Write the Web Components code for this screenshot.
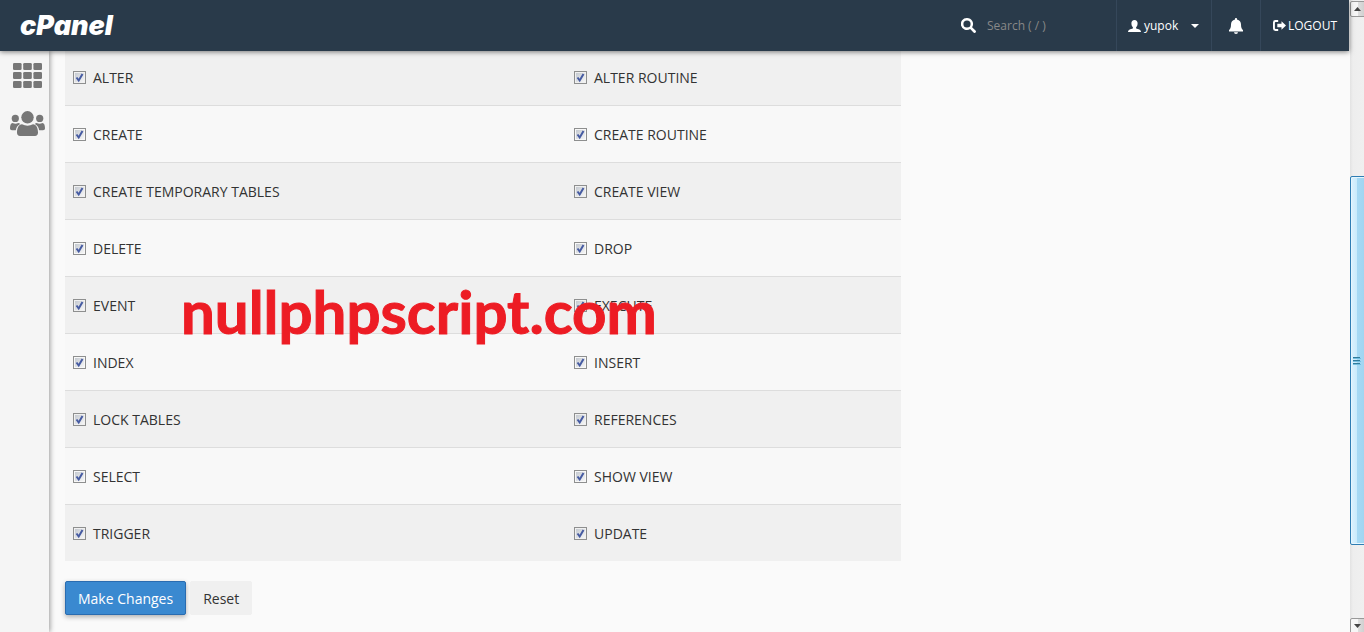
<!DOCTYPE html>
<html lang="en">
<head>
<meta charset="utf-8">
<title>cPanel - Manage User Privileges</title>
<style>
html, body { height: 100%; margin: 0; }
body { font: 14px/20px "Open Sans", "Noto Sans", sans-serif; color: #333; background: #fafafa; overflow: hidden; }
</style>
</head>
<body>
<cp-app></cp-app>

<template id="t-app">
<style>
:host { display: flex; height: 100vh; overflow: hidden; }
.page { flex: 1; min-width: 0; display: flex; flex-direction: column; }
.body { flex: 1; min-height: 0; display: flex; }
main { position: relative; flex: 1; min-width: 0; padding: 0 16px; overflow: hidden; }
</style>
<div class="page">
  <cp-header user="yupok"></cp-header>
  <div class="body">
    <cp-sidebar></cp-sidebar>
    <main>
      <cp-privileges></cp-privileges>
      <cp-actions></cp-actions>
      <cp-watermark>nullphpscript.com</cp-watermark>
    </main>
  </div>
</div>
<cp-scrollbar></cp-scrollbar>
</template>

<template id="t-header">
<style>
:host { position: relative; z-index: 2; display: flex; align-items: stretch; height: 51px; flex: none; background: #293a4a; color: #fff; box-shadow: 0 1px 5px rgba(0,0,0,.5); font-size: 12px; line-height: 20px; }
a { color: inherit; text-decoration: none; }
.logo { display: flex; align-items: center; padding-left: 20px; font: italic 900 27px/51px Inter, "Liberation Sans", sans-serif; }
form { margin: 0 0 0 auto; display: flex; align-items: center; gap: 11px; width: 155px; }
input { border: 0; outline: 0; background: none; padding: 0; min-width: 0; flex: 1; color: #fff; font: 12px/20px "Open Sans", sans-serif; }
input::placeholder { color: #888; opacity: 1; }
.item { box-sizing: border-box; display: flex; align-items: center; border: 0; border-left: 1px solid #35475a; background: none; color: inherit; font: inherit; padding: 0 12px 0 11px; margin: 0; }
.user { width: 95px; gap: 3px; }
.caret { margin-left: auto; }
.bell { width: 49px; justify-content: center; padding: 0; }
.out { width: 89px; gap: 2px; padding-left: 12px; }
svg { display: block; flex: none; fill: currentColor; }
</style>
<a class="logo" href="#">cPanel</a>
<form role="search">
  <svg width="15" height="15" viewBox="0 0 15 15"><path fill-rule="evenodd" d="M6 0a6 6 0 1 0 3.2 11l3.3 3.5a1.4 1.4 0 0 0 2-2L11.100 9.200A6 6 0 0 0 6 0zm0 2.400a3.600 3.600 0 1 1 0 7.200 3.600 3.600 0 0 1 0-7.200z"/></svg>
  <input type="text" placeholder="Search ( / )" aria-label="Search">
</form>
<button class="item user" type="button">
  <svg width="13" height="12" viewBox="0 0 13 12"><path d="M6.500 0C4.500 0 3.400 1.300 3.400 3.200c0 1.700.6 3.300 1.500 4.100v1c-.2.5-3.400 1-4.200 1.900C.2 10.700.1 11.300 0 12h13c-.1-.7-.2-1.300-.7-1.800-.8-.9-4-1.400-4.200-1.900v-1c.9-.8 1.500-2.400 1.500-4.100C9.600 1.300 8.500 0 6.500 0z"/></svg>
  <span class="name"></span>
  <svg class="caret" width="8" height="4" viewBox="0 0 8 4"><path d="M0 0h8L4 4z"/></svg>
</button>
<button class="item bell" type="button" aria-label="Notifications">
  <svg width="14" height="16" viewBox="0 0 14 16"><path d="M7 0c.6 0 1 .4 1 1v.4c2.600.5 4 2.400 4 5 0 3 .7 4.600 2 5.600v1.500H0V12c1.300-1 2-2.600 2-5.600 0-2.600 1.400-4.500 4-5V1c0-.6.4-1 1-1zM5 14.300h4a2 1.700 0 0 1-4 0z"/></svg>
</button>
<a class="item out" href="#">
  <svg width="13" height="11" viewBox="0 0 13 11"><path d="M5.200 0v1.900H2.700c-.5 0-.8.3-.8.800v5.600c0 .5.300.8.800.8h2.500V11H2.400A2.400 2.400 0 0 1 0 8.600V2.400A2.400 2.400 0 0 1 2.400 0zM8.500 1.200 13 5.500 8.500 9.800V7.200H4.300V3.800h4.200z"/></svg>
  <span>LOGOUT</span>
</a>
</template>

<template id="t-sidebar">
<style>
:host { position: relative; z-index: 1; box-sizing: border-box; width: 49px; flex: none; background: #f5f5f5; box-shadow: 1px 0 5px rgba(0,0,0,.4); }
nav { display: flex; flex-direction: column; align-items: center; gap: 23px; padding: 12px 0 0 6px; }
a { display: block; color: #777; }
svg { display: block; fill: currentColor; }
</style>
<nav aria-label="Main">
  <a href="#" aria-label="Home"><svg width="29" height="25" viewBox="0 0 29 25"><g id="r"><rect width="8.600" height="7" rx="1.300"/><rect x="10.200" width="8.600" height="7" rx="1.300"/><rect x="20.400" width="8.600" height="7" rx="1.300"/></g><use href="#r" y="9"/><use href="#r" y="18"/></svg></a>
  <a href="#" aria-label="User Manager"><svg width="35" height="25" viewBox="0 0 35 25"><circle cx="17.500" cy="6.300" r="6.200"/><circle cx="5.300" cy="7.400" r="3.600"/><circle cx="29.700" cy="7.400" r="3.600"/><path d="M12 13.200c3.500 1.900 7.500 1.900 11 0 3.300.4 5 3.800 5 8.300 0 2.200-1.100 3.500-3 3.500H10c-1.900 0-3-1.300-3-3.500 0-4.500 1.700-7.900 5-8.300zM2.500 12c2 1 4 1 5.800.1.800.1 1.400.4 1.800.9-2.500 1.300-3.800 3.500-4.300 6.300H2c-1.300 0-2-.7-2-2C0 14.200.8 12.200 2.500 12zM32.500 12c-2 1-4 1-5.800.1-.8.1-1.400.4-1.800.9 2.500 1.300 3.800 3.500 4.300 6.300H33c1.300 0 2-.7 2-2 0-3.100-.8-5.100-2.500-5.300z"/></svg></a>
</nav>
</template>

<template id="t-privileges">
<style>
:host { display: block; max-width: 836px; margin-top: -3px; }
table { width: 100%; table-layout: fixed; border-collapse: separate; border-spacing: 0; }
td { height: 56px; padding: 0 8px; border-top: 1px solid #ddd; background: #f8f8f8; }
td:first-child { width: 485px; }
tr:nth-child(odd) td { background: #f0f0f0; }
</style>
<table aria-label="Privileges"><tbody></tbody></table>
</template>

<template id="t-check">
<style>
:host { display: block; }
label { display: flex; align-items: center; gap: 7px; line-height: 20px; }
span { padding-top: 2px; }
input { appearance: none; box-sizing: border-box; flex: none; width: 13px; height: 13px; margin: 0; border: 1px solid #8e8f8f; background: linear-gradient(135deg, #c4c9d0, #f6f6f6) content-box #f4f4f4; padding: 1px; }
input:checked { background: url("data:image/svg+xml,%3Csvg xmlns='http://www.w3.org/2000/svg' viewBox='0 0 11 11'%3E%3Cpath d='M2.500 5.500 4.700 8.500 8.500 2' fill='none' stroke='%23465ba2' stroke-width='2'/%3E%3C/svg%3E") center / 11px 11px no-repeat border-box, linear-gradient(135deg, #c4c9d0, #f6f6f6) content-box #f4f4f4; }
</style>
<label><input type="checkbox" checked><span><slot></slot></span></label>
</template>

<template id="t-actions">
<style>
:host { display: flex; gap: 4px; margin-top: 20px; }
button { box-sizing: border-box; height: 34px; padding: 2px 12px 0; border: 1px solid #f0f0f0; border-radius: 2px; background: #f0f0f0; color: #333; font: inherit; }
.primary { background: #3a89d0; border-color: #2a6cb0; color: #fff; box-shadow: 0 2px 5px rgba(0,0,0,.3); }
</style>
<button class="primary" type="button">Make Changes</button>
<button type="button">Reset</button>
</template>

<template id="t-watermark">
<style>
:host { position: absolute; left: 132px; top: 226px; color: #ed1c24; font: 700 60px/68px Lato, "Open Sans", sans-serif; -webkit-text-stroke: 1px #ed1c24; white-space: nowrap; pointer-events: none; }
</style>
<slot></slot>
</template>

<template id="t-scrollbar">
<style>
:host { box-sizing: border-box; width: 15px; flex: none; display: flex; flex-direction: column; padding: 1px 0 0 1px; background: linear-gradient(90deg, #fafafa 1px, #e3e3e3 1px, #eee 4px, #f0f0f0); overflow: hidden; }
button { box-sizing: border-box; height: 16px; flex: none; width: 17px; padding: 0 0 0 3px; border: 1px solid #999; border-radius: 2px; background: linear-gradient(90deg, #f6f6f6 45%, #ddd 50%, #ccc); }
button:last-child { margin-bottom: -2px; }
svg { display: block; fill: #444; }
.before { flex: 160; }
.after { flex: 73; }
.thumb { flex: 369; box-sizing: border-box; width: 17px; border: 1px solid #2f7db3; border-radius: 2px; box-shadow: inset 0 0 0 1px #e5f6fe; background: linear-gradient(90deg, #dcf2fe, #c9eafb 6px, #a6d9f4 6px, #9fd4f0); display: flex; align-items: center; padding-left: 2px; }
</style>
<button type="button" aria-label="Scroll up"><svg width="7" height="4" viewBox="0 0 7 4"><path d="M0 4h7L3.500 0z"/></svg></button>
<div class="before"></div>
<div class="thumb"><svg width="8" height="8" viewBox="0 0 8 8"><path fill="#327c9c" d="M0 0h7v1H0zM0 3h7v1H0zM0 6h7v1H0z"/><path fill="#74bfe0" d="M0 1h8v1H0zM0 4h8v1H0zM0 7h8v1H0z"/></svg></div>
<div class="after"></div>
<button type="button" aria-label="Scroll down"><svg width="7" height="4" viewBox="0 0 7 4"><path d="M0 0h7L3.500 4z"/></svg></button>
</template>

<script>
class Base extends HTMLElement {
  constructor() {
    super();
    const t = document.getElementById(this.constructor.template);
    this.attachShadow({ mode: "open" }).append(t.content.cloneNode(true));
  }
}
const define = (name, extra) => customElements.define("cp-" + name, class extends Base {
  static template = "t-" + name;
  connectedCallback() { if (extra) extra(this, this.shadowRoot); }
});

const PRIVILEGES = [
  ["ALTER", "ALTER ROUTINE"],
  ["CREATE", "CREATE ROUTINE"],
  ["CREATE TEMPORARY TABLES", "CREATE VIEW"],
  ["DELETE", "DROP"],
  ["EVENT", "EXECUTE"],
  ["INDEX", "INSERT"],
  ["LOCK TABLES", "REFERENCES"],
  ["SELECT", "SHOW VIEW"],
  ["TRIGGER", "UPDATE"]
];

define("check");
define("header", (el, root) => { root.querySelector(".name").textContent = el.getAttribute("user"); });
define("sidebar");
define("privileges", (el, root) => {
  root.querySelector("tbody").innerHTML = PRIVILEGES.map(row =>
    "<tr>" + row.map(p => `<td><cp-check>${p}</cp-check></td>`).join("") + "</tr>").join("");
});
define("actions");
define("watermark");
define("scrollbar");
define("app");
</script>
</body>
</html>
